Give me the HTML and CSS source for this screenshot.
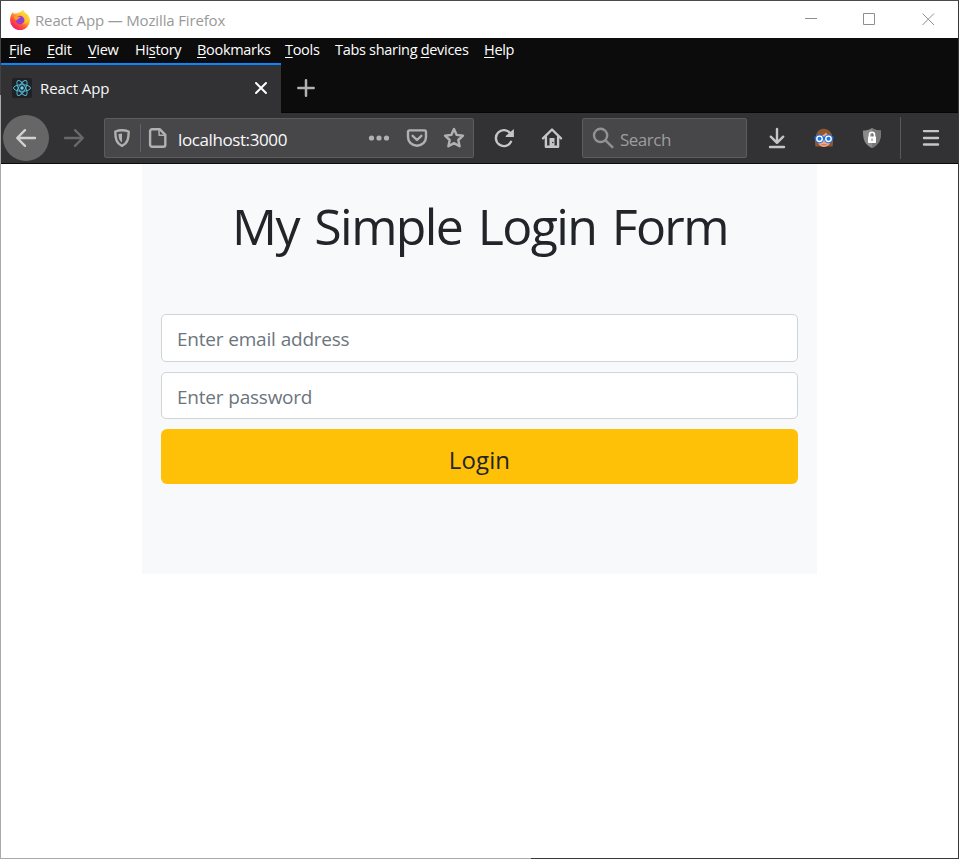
FILE: index.html
```html
<!DOCTYPE html>
<html lang="en">
<head>
<meta charset="utf-8">
<title>React App</title>
<link rel="stylesheet" href="styles.css">
</head>
<body>
<div class="window">
  <header class="titlebar">
    <svg class="firefox" viewBox="0 0 20 20">
      <defs>
        <linearGradient id="fox" x1="0.85" y1="0.1" x2="0.2" y2="0.95">
          <stop offset="0" stop-color="#fff044"/><stop offset=".35" stop-color="#ffb52a"/><stop offset=".65" stop-color="#ff5634"/><stop offset="1" stop-color="#f0127a"/>
        </linearGradient>
        <radialGradient id="globe" cx=".5" cy=".4" r=".6"><stop offset="0" stop-color="#7a45e8"/><stop offset="1" stop-color="#a83ac0"/></radialGradient>
      </defs>
      <path fill="url(#fox)" d="M1.9 3.6C2.3 3 2.8 2.3 3 1.9c.2 1 .6 1.6 1.1 2.1C5 3.400 6.200 3.100 7.200 3.500 8.300 2.300 9.500 2 10.300 2.500 11 1.400 12.200.5 13.300.1c.1 1.600 1 2.500 2.200 3.500.5.400 1 .9 1.400 1.500l.300-.8c1.700 1.800 2.700 4 2.700 6.200a9.900 9.700 0 0 1-19.800 0C.1 8 .6 5.600 1.900 3.600Z"/>
      <path fill="#ffcf34" d="M13.300.1c-.9 2.600 2.900 4 3.200 7.500.3 3-1.300 5.300-3.500 6.300 4.400-.4 6-4.400 4.900-8.100-1-2.300-4.200-3-4.600-5.700Z"/>
      <circle cx="10" cy="10" r="4.300" fill="url(#globe)"/>
      <path fill="#ff9a28" d="M3.800 6.300c1.700-.8 3.400-.5 4.400.5.800-.2 1.700-.1 2.200.2-.2.900-1.300 1.200-2.200 1.700-.4.800-1.500 1-2.300 2-.7-1.200-1.900-2.500-2.100-4.400Z"/>
    </svg>
    <span class="caption">React App — Mozilla Firefox</span>
    <svg class="controls" viewBox="0 0 130 14" fill="none" stroke="#8f8f8f">
      <path d="M0 5.500h12M58.500.5h11v11h-11zM117.500.5l11.500 11.500M129 .5 117.500 12"/>
    </svg>
  </header>

  <nav class="menubar">
    <span><u>F</u>ile</span><span><u>E</u>dit</span><span><u>V</u>iew</span><span>Hi<u>s</u>tory</span><span><u>B</u>ookmarks</span><span><u>T</u>ools</span><span>Tabs sharing <u>d</u>evices</span><span><u>H</u>elp</span>
  </nav>

  <div class="tabstrip">
    <div class="tab">
      <svg class="react" viewBox="0 0 20 20" fill="none" stroke="#53b6d0">
        <rect width="20" height="20" rx="2" fill="#202124" stroke="none"/>
        <ellipse cx="10" cy="10" rx="8.500" ry="3.300"/>
        <ellipse cx="10" cy="10" rx="8.500" ry="3.300" transform="rotate(60 10 10)"/>
        <ellipse cx="10" cy="10" rx="8.500" ry="3.300" transform="rotate(120 10 10)"/>
        <circle cx="10" cy="10" r="1.700" fill="#61dafb" stroke="none"/>
      </svg>
      <span class="tab-label">React App</span>
      <svg class="close" viewBox="0 0 14 14" fill="none" stroke="#fff" stroke-width="2" stroke-linecap="round"><path d="M2 2l10 10M12 2 2 12"/></svg>
    </div>
    <svg class="plus" viewBox="0 0 18 18" fill="none" stroke="#b1b1b1" stroke-width="2.500" stroke-linecap="round"><path d="M9 1.300v15.400M1.300 9h15.400"/></svg>
  </div>

  <div class="toolbar">
    <div class="back"><svg class="icon" viewBox="0 0 24 24"><path d="M21 12H3.500M11 4.200 3.200 12l7.800 7.800"/></svg></div>
    <svg class="icon forward" viewBox="0 0 24 24"><path d="M3 12h17.500M13 4.200l7.800 7.800-7.800 7.800"/></svg>
    <div class="field urlbar">
      <svg class="icon tracking" viewBox="0 0 24 24"><path d="M12 4.200c-2.100 0-4.400.4-6.700 1.300.1 6.800.7 11.600 6.700 14.300 6-2.700 6.600-7.500 6.700-14.300-2.300-.9-4.600-1.300-6.700-1.300Z"/><path class="solid" d="M12 7.500c-1.300 0-2.500.2-3.600.6.200 4.300.9 6.700 3.600 8.500Z"/></svg>
      <i class="split"></i>
      <svg class="icon page" viewBox="0 0 24 24"><path d="M6.100 3.200h7.600l5.600 5.600v10a2 2 0 0 1-2 2H6.100a2 2 0 0 1-2-2V5.200a2 2 0 0 1 2-2Z"/><path class="thin" d="M13.100 3.500v5.800h5.800"/></svg>
      <span class="address">localhost:3000</span>
      <svg class="icon" viewBox="0 0 24 24"><g class="solid"><circle cx="4.500" cy="12" r="2.600"/><circle cx="12" cy="12" r="2.600"/><circle cx="19.500" cy="12" r="2.600"/></g></svg>
      <svg class="icon pocket" viewBox="0 0 24 24"><path d="M4.500 4.400h15a1.500 1.500 0 0 1 1.500 1.500V11c0 5-3.800 8.700-9 8.700S3 16 3 11V5.900a1.500 1.500 0 0 1 1.500-1.500Z"/><path d="M7.600 9.800 12 14l4.400-4.200"/></svg>
      <svg class="icon star" viewBox="0 0 24 24"><path d="m12 3.100 2.700 5.800 6.300.8-4.700 4.300 1.300 6.300-5.600-3.200-5.600 3.200L7.700 14 3 9.700l6.300-.8Z"/></svg>
    </div>
    <svg class="icon light reload" viewBox="0 0 24 24"><path d="M19 15.800A8 8 0 1 1 18.300 7.300"/><path class="solid" d="M21.900 3v8h-8.200v-1.100Z"/></svg>
    <svg class="icon light home" viewBox="0 0 24 24"><path d="M3 12.300 12 3.500l9 8.800"/><path d="M5.900 11v9.700h12.200V11"/><path class="solid" d="M9.500 21v-9h5v9Z"/><circle cx="12.800" cy="16.500" r=".8" fill="#323234" stroke="none"/></svg>
    <div class="field search">
      <svg class="icon glass" viewBox="0 0 24 24"><circle cx="9.600" cy="9.400" r="6.600"/><path d="m14.500 14.400 6.900 6.700"/></svg>
      <span>Search</span>
    </div>
    <svg class="icon light download" viewBox="0 0 24 24"><path d="M12 3v13.500M5.800 10.700l6.200 6.100 6.200-6.100M5 21h14"/></svg>
    <svg class="addon" viewBox="0 0 24 24">
      <path fill="#91572f" d="M3.500 20.500C2.500 16 3 8 6.500 4.800c4-3.300 9.500-2.200 12 1.500C21.500 10 21.500 17 20.500 20.500Z"/>
      <path fill="#f4a582" d="M5.500 11C9 10.500 12.500 8.500 14 6.500c1 2 3 3.500 5 4.500.3 6.500-3 10-7 10s-6.800-3.500-6.500-10Z"/>
      <path stroke="#c96f55" d="M9.500 18.700h5"/>
      <path stroke="#1769d2" stroke-width="2.500" d="M2.500 11.800h19"/>
      <g fill="#1676ee"><circle cx="7.500" cy="12.800" r="4.400"/><circle cx="16.500" cy="12.800" r="4.400"/></g>
      <g fill="#1676ee" stroke="#fff" stroke-width="1.400"><circle cx="7.500" cy="12.800" r="2.700"/><circle cx="16.500" cy="12.800" r="2.700"/></g>
    </svg>
    <svg class="guard" viewBox="0 0 24 24">
      <path fill="#8b8b8b" d="M12 2c3 1.800 6 2.600 9 2.600C21.200 13 19.500 19 12 22 4.500 19 2.800 13 3 4.600 6 4.600 9 3.800 12 2Z"/>
      <path fill="#777" d="M12 2c3 1.800 6 2.600 9 2.600C21.200 13 19.500 19 12 22Z"/>
      <path fill="none" stroke="#fff" stroke-width="1.600" d="M9.500 11V8.800a2.500 2.500 0 0 1 5 0V11"/><rect x="8" y="10.500" width="8" height="6.500" rx=".6" fill="#fff"/><path stroke="#777" d="M12 12.500v2.500"/>
    </svg>
    <i class="rule"></i>
    <svg class="icon light menu" viewBox="0 0 24 24"><path d="M5 5.100h14M5 12h14M5 18.500h14"/></svg>
  </div>

  <main>
    <form class="panel">
      <h1>My Simple Login Form</h1>
      <input type="email" placeholder="Enter email address">
      <input class="password" type="password" placeholder="Enter password">
      <button type="button">Login</button>
    </form>
  </main>
</div>
</body>
</html>
```
FILE: styles.css
```css
* { box-sizing: border-box; }
body { margin: 0; font-family: "Open Sans", "Noto Sans", sans-serif; }
svg { display: block; flex: none; }

.window {
  height: 859px;
  padding: 1px;
  overflow: hidden;
  display: flex;
  flex-direction: column;
  background:
    linear-gradient(#4b4a4c, #4b4a4c) 0 0 / 100% 1px no-repeat,
    linear-gradient(#38383a, #38383a) 100% 0 / 1px 100% no-repeat,
    linear-gradient(90deg, #a9a9a9 531px, #38383a 531px) 0 100% / 100% 1px no-repeat,
    linear-gradient(#424244 95px, #a9a9a9 95px) 0 0 / 1px 100% no-repeat,
    #fff;
}

.titlebar { height: 37px; flex: none; display: flex; align-items: center; background: #fff; }
.firefox { width: 20px; height: 20px; margin-left: 9px; }
.caption { margin-left: 5px; flex: 1; font-size: 15px; letter-spacing: -.15px; color: #999; white-space: nowrap; }
.controls { width: 130px; height: 14px; margin-right: 23px; }

.menubar {
  height: 25px;
  flex: none;
  padding-left: 8px;
  display: grid;
  grid-template-columns: 38px 41px 47px 62px 88px 50px 149px auto;
  background: #0c0c0d;
  color: #fff;
  font-size: 14.5px;
  line-height: 24px;
  letter-spacing: -.3px;
  white-space: nowrap;
}
.menubar u { text-underline-offset: 2px; text-decoration-thickness: 1px; }

.tabstrip { height: 50px; flex: none; display: flex; align-items: center; background: #0c0c0d; border-bottom: 1px solid #050505; }
.tab { width: 280px; height: 50px; padding-bottom: 2px; align-self: flex-start; display: flex; align-items: center; background: #323234; border-top: 2px solid #0a84ff; color: #f9f9fa; }
.react { width: 20px; height: 20px; margin-left: 11px; }
.tab-label { flex: 1; margin-left: 8px; font-size: 15px; letter-spacing: -.1px; }
.close { width: 14px; height: 14px; margin-right: 13px; }
.plus { width: 18px; height: 18px; margin-left: 16px; }

.toolbar { height: 51px; flex: none; padding-left: 2px; display: flex; align-items: center; background: #323234; border-bottom: 1px solid #0c0c0d; }
.icon { width: 24px; height: 24px; fill: none; stroke: #b1b1b3; stroke-width: 2.400; stroke-linecap: round; stroke-linejoin: round; }
.icon .solid { fill: #b1b1b3; stroke: none; }
.icon .thin { stroke-width: 1.500; }
.light { stroke: #c6c6c7; }
.light .solid { fill: #c6c6c7; }
.back { width: 46px; height: 46px; border-radius: 50%; background: #666667; display: grid; place-items: center; }
.back .icon { stroke: #d1d1d2; }
.forward { margin-left: 13px; stroke: #68686a; }
.field { height: 40px; display: flex; align-items: center; background: #474749; border: 1px solid #5c5c5f; border-radius: 2px; }
.urlbar { width: 370px; margin-left: 18px; padding: 0 7px 0 5px; }
.split { width: 1px; height: 28px; margin-left: 6px; background: #5d6470; }
.page { margin-left: 5px; }
.address { flex: 1; margin-left: 8px; padding-top: 3px; color: #f9f9fa; font-size: 17px; letter-spacing: -.4px; }
.pocket { margin-left: 14px; }
.star { margin-left: 13px; }
.reload { margin-left: 18px; }
.home { margin-left: 24px; }
.search { width: 165px; margin-left: 18px; color: #9d9d9f; font-size: 17px; letter-spacing: -.5px; }
.search span { margin-left: 5px; padding-top: 3px; }
.glass { margin-left: 8px; stroke: #929294; }
.download { margin-left: 18px; }
.addon, .guard { width: 24px; height: 24px; }
.addon { margin-left: 23px; }
.guard { margin-left: 24px; }
.rule { width: 1px; height: 42px; margin-left: 16px; background: #59595b; }
.menu { margin-left: 18px; }

main { flex: 1; background: #fff; }
.panel { width: 675px; height: 410px; margin-left: 141px; padding: 0 19px; display: flex; flex-direction: column; background: #f8f9fa; color: #212529; }
h1 { height: 60px; margin: 32px 0 58px; font-size: 50px; line-height: 60px; font-weight: 400; letter-spacing: -1.6px; word-spacing: 4px; text-indent: 1px; text-align: center; white-space: nowrap; }
input { height: 48px; flex: none; padding: 2px 15px 0; border: 1px solid #ced4da; border-radius: 5px; background: #fff; font: 19px "Open Sans", sans-serif; letter-spacing: -.25px; word-spacing: .5px; color: #495057; }
input::placeholder { color: #6c757d; opacity: 1; }
.password { height: 47px; margin-top: 10px; }
button { height: 55px; flex: none; margin-top: 10px; padding: 6px 0 0; border: 0; border-radius: 6px; background: #ffc107; color: #212529; font: 24px "Open Sans", sans-serif; letter-spacing: .1px; }
```
